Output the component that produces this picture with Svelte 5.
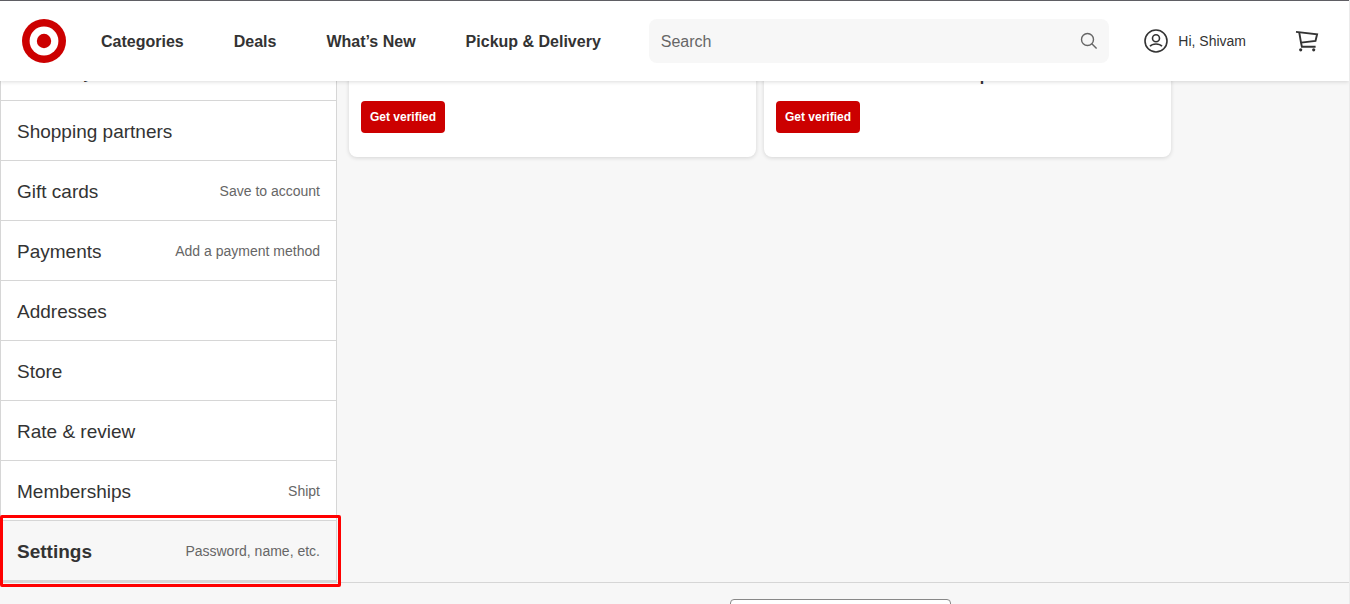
<script lang="ts">
  type NavItem = { label: string; note?: string; active?: boolean };

  const links = ['Categories', 'Deals', 'What’s New', 'Pickup & Delivery'];

  const items: NavItem[] = [
    { label: 'Directory' },
    { label: 'Shopping partners' },
    { label: 'Gift cards', note: 'Save to account' },
    { label: 'Payments', note: 'Add a payment method' },
    { label: 'Addresses' },
    { label: 'Store' },
    { label: 'Rate & review' },
    { label: 'Memberships', note: 'Shipt' },
    { label: 'Settings', note: 'Password, name, etc.', active: true }
  ];

  const offers = ['All students', 'All medical assistance recipients'];

  let query = $state('');
</script>

<div class="page">
  <header class="header">
    <a class="logo" href="#home" aria-label="Home">
      <svg width="44" height="44" viewBox="0 0 44 44" aria-hidden="true">
        <circle cx="22" cy="22" r="22" fill="#cc0000" />
        <circle cx="22" cy="22" r="14.4" fill="#fff" />
        <circle cx="22" cy="22" r="7.2" fill="#cc0000" />
      </svg>
    </a>

    <nav class="links" aria-label="Main">
      {#each links as link}
        <a href="#main">{link}</a>
      {/each}
    </nav>

    <form class="search" onsubmit={(e) => e.preventDefault()}>
      <input type="text" placeholder="Search" aria-label="Search" bind:value={query} />
      <button type="submit" aria-label="Submit search">
        <svg width="18" height="18" viewBox="0 0 18 18" fill="none" stroke="#666" stroke-width="1.4" aria-hidden="true">
          <circle cx="7.5" cy="7.5" r="6" />
          <path d="M11.8 11.8l4.8 4.8" />
        </svg>
      </button>
    </form>

    <a class="account" href="#account">
      <svg width="24" height="24" viewBox="0 0 24 24" fill="none" stroke="#333" stroke-width="1.6" aria-hidden="true">
        <circle cx="12" cy="12" r="11" />
        <circle cx="12" cy="9.3" r="3.5" />
        <path d="M6 17.3c1.3-1.6 3.3-2.3 6-2.3s4.7.7 6 2.3" />
      </svg>
      <span>Hi, Shivam</span>
    </a>

    <a class="cart" href="#cart" aria-label="Cart">
      <svg width="24" height="22" viewBox="0 0 24 22" fill="none" stroke="#333" stroke-width="1.9" aria-hidden="true">
        <path d="M1 1.9L22.1 4.3L20.5 10.9L6 12.6" />
        <path d="M4.2 2.2L6 12.6L6.9 16.7H20.6" />
        <circle cx="5.7" cy="19.8" r="1.6" fill="#333" stroke="none" />
        <circle cx="18.7" cy="19.8" r="1.6" fill="#333" stroke="none" />
      </svg>
    </a>
  </header>

  <div class="body">
    <nav class="sidebar" aria-label="Account">
      {#each items as item}
        <a class="item" class:active={item.active} href="#section">
          <span>{item.label}</span>
          {#if item.note}
            <small>{item.note}</small>
          {/if}
        </a>
      {/each}
    </nav>

    <main class="offers">
      {#each offers as offer}
        <section class="card">
          <h2>{offer}</h2>
          <button type="button">Get verified</button>
        </section>
      {/each}
    </main>
  </div>

  <footer class="footer">
    <input type="email" aria-label="Email address" />
  </footer>
</div>

<style>
  :global(body) {
    background: #f7f7f7;
  }

  .page {
    height: 100vh;
    overflow: hidden;
    box-sizing: border-box;
    border-right: 1px solid #ebebeb;
    background: #f7f7f7;
    color: #333;
    font-family: 'Liberation Sans', Arial, sans-serif;
  }

  a {
    color: inherit;
    text-decoration: none;
  }

  svg {
    display: block;
  }

  .header {
    position: relative;
    z-index: 2;
    display: flex;
    align-items: center;
    height: 80px;
    padding: 0 30px 0 22px;
    border-top: 1px solid #5f5e64;
    background: #fff;
    box-shadow: 0 1px 4px rgba(0, 0, 0, 0.14);
  }

  .links {
    display: flex;
    gap: 50px;
    margin-left: 35px;
    padding-top: 2px;
    font-size: 16px;
    font-weight: 700;
    white-space: nowrap;
  }

  .search {
    display: flex;
    flex: 1;
    height: 44px;
    margin: 0 35px 0 48px;
    border-radius: 8px;
    background: #f7f7f7;
  }

  .search input {
    flex: 1;
    min-width: 0;
    padding: 2px 12px 0;
    border: 0;
    background: none;
    color: #333;
    font: inherit;
    font-size: 16px;
  }

  .search input::placeholder {
    color: #666;
    opacity: 1;
  }

  .search button {
    padding: 0 11px;
    border: 0;
    background: none;
    cursor: pointer;
  }

  .account {
    display: flex;
    align-items: center;
    gap: 10px;
    margin-right: 49px;
    font-size: 14px;
    white-space: nowrap;
  }

  /* The list is scrolled part of the way under the header */
  .body {
    display: flex;
    align-items: flex-start;
    margin-top: -41px;
    border-bottom: 1px solid #d6d6d6;
  }

  .sidebar {
    flex: none;
    box-sizing: border-box;
    width: 337px;
    margin-bottom: -1px;
    border: 1px solid #d6d6d6;
    border-top: 0;
    border-bottom-width: 3px;
    background: #fff;
  }

  .item {
    position: relative;
    display: flex;
    align-items: center;
    justify-content: space-between;
    box-sizing: border-box;
    height: 60px;
    padding: 0 16px;
    border-top: 1px solid #d6d6d6;
    font-size: 19px;
  }

  .item span {
    padding-top: 2px;
  }

  .item small {
    color: #666;
    font-size: 14px;
  }

  .item.active {
    background: #f7f7f7;
    font-weight: 700;
  }

  .item.active::after {
    content: '';
    position: absolute;
    inset: -6px -5px -7px -1px;
    border: 3px solid #f00;
    border-radius: 2px;
  }

  .item.active small {
    font-weight: 400;
  }

  .offers {
    display: flex;
    flex: 1;
    gap: 8px;
    max-width: 822px;
    margin-left: 12px;
  }

  .card {
    flex: 1;
    box-sizing: border-box;
    padding: 24px 12px;
    border-radius: 8px;
    background: #fff;
    box-shadow: 0 1px 4px rgba(0, 0, 0, 0.14);
  }

  .card h2 {
    margin: 0 0 13px;
    font-size: 16px;
    line-height: 24px;
  }

  .card button {
    display: block;
    height: 32px;
    padding: 0 9px;
    border: 0;
    border-radius: 4px;
    background: #cc0000;
    color: #fff;
    font: 700 12px 'Liberation Sans', Arial, sans-serif;
    cursor: pointer;
  }

  .footer {
    display: flex;
    justify-content: center;
    padding: 16px 0 16px 332px;
  }

  .footer input {
    box-sizing: border-box;
    width: 221px;
    height: 44px;
    border: 1px solid #888;
    border-radius: 4px;
    background: #fff;
  }
</style>
